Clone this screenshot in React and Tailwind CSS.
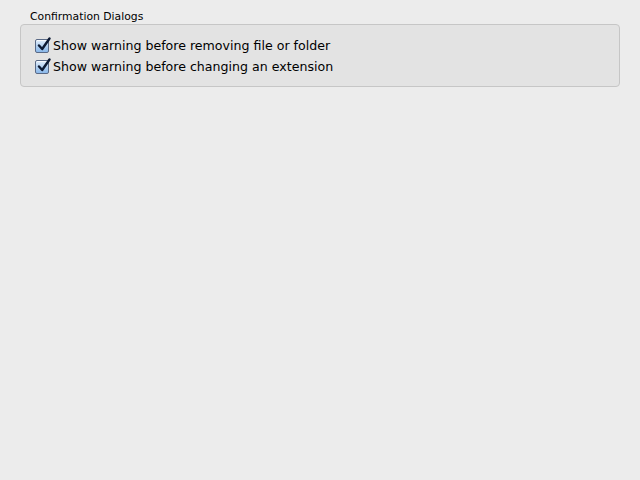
import { useState } from 'react';

function MacCheckbox({ checked, onChange, label }) {
  return (
    <label className="flex items-center h-[21px] cursor-default select-none">
      <span
        onClick={onChange}
        className="relative w-[14px] h-[14px] mr-[4px] rounded-[2px] border border-[#5a6a86] bg-gradient-to-b from-[#e4effb] via-[#b3d1f1] to-[#8ab8ea] shadow-[inset_0_1px_0_rgba(255,255,255,0.7)]"
      >
        {checked && (
          <svg className="absolute left-[1px] top-[-3px]" width="14" height="15" viewBox="0 0 14 15">
            <path d="M2 8.5 L5.2 12 L12.5 1.5" fill="none" stroke="#0d1a33" strokeWidth="2.4" strokeLinecap="round" strokeLinejoin="round" />
          </svg>
        )}
      </span>
      <span className="text-[12.6px] text-black pt-[1px]">{label}</span>
    </label>
  );
}

export default function App() {
  const [warnRemove, setWarnRemove] = useState(true);
  const [warnExt, setWarnExt] = useState(true);

  return (
    <div className="w-[640px] h-[480px] bg-[#ececec] font-['DejaVu_Sans',sans-serif] pt-[10px] px-[20px]">
      <div className="text-[10.8px] text-black pl-[10px] h-[14px] leading-[14px]">Confirmation Dialogs</div>
      <div className="h-[63px] rounded-[4px] border border-[#c6c6c6] bg-[#e3e3e3] pt-[10px] pl-[14px]">
        <MacCheckbox checked={warnRemove} onChange={() => setWarnRemove(v => !v)} label="Show warning before removing file or folder" />
        <MacCheckbox checked={warnExt} onChange={() => setWarnExt(v => !v)} label="Show warning before changing an extension" />
      </div>
    </div>
  );
}
